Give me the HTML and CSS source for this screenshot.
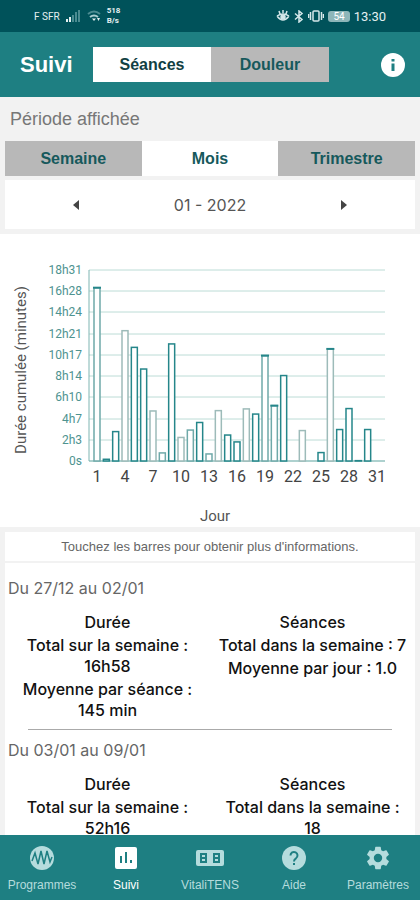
FILE: index.html
```html
<!DOCTYPE html>
<html lang="fr">
<head>
  <meta charset="UTF-8" />
  <meta name="viewport" content="width=device-width, initial-scale=1.0">
  <title>Suivi - Séances</title>
  <link rel="stylesheet" href="styles.css">
</head>
<body>
  <div class="status-bar">
    <div class="status-left">
      <span>F SFR</span>
      <svg width="15" height="12" viewBox="0 0 15 12">
        <path d="M0 9h2v3H0zM3 7h2v5H3z" fill="#e4f0f1"/>
        <path d="M6 5h2v7H6zM9 2h2v10H9zM12 0h2v12h-2z" fill="#4b8b91"/>
      </svg>
      <svg width="14" height="12" viewBox="0 0 14 12" fill="none">
        <path d="M1 4q6-5 12 0" stroke="#4b8b91" stroke-width="2"/>
        <path d="M3 7q4-3 8 0" stroke="#a9cdd0" stroke-width="2"/>
        <path d="M5 8.500h4L7 11zM10 8h3l-1.500 3z" fill="#e4f0f1"/>
      </svg>
      <span class="net-speed">518<br>B/s</span>
    </div>
    <div class="status-right">
      <svg width="14" height="12" viewBox="0 0 14 12" fill="none" stroke="#d5e8ea" stroke-width="1.500">
        <path d="M1 6q6 8 12 0M1 6q6-4 12 0M3 1l1 3M7 0v3M11 1l-1 3"/>
        <circle cx="7" cy="7" r="2" fill="#d5e8ea"/>
      </svg>
      <svg width="10" height="13" viewBox="0 0 10 13" fill="none" stroke="#d5e8ea" stroke-width="1.500">
        <path d="M1 3.500l7 6-3 2.500V1l3 2.500-7 6"/>
      </svg>
      <svg width="16" height="12" viewBox="0 0 16 12" fill="none" stroke="#d5e8ea" stroke-width="1.500">
        <rect x="5" y="1" width="6" height="10" rx="1"/>
        <path d="M2.500 2v8M13.500 2v8M.5 4v4M15.500 4v4"/>
      </svg>
      <span class="battery">54</span>
      <span class="clock">13:30</span>
    </div>
  </div>

  <header class="header">
    <h1>Suivi</h1>
    <div class="segments header-tabs">
      <button class="segment active">Séances</button>
      <button class="segment">Douleur</button>
    </div>
    <button class="info" aria-label="Informations">
      <svg width="24" height="24" viewBox="0 0 24 24">
        <circle cx="12" cy="12" r="12" fill="#fff"/>
        <path d="M10.500 6h3v2.500h-3zM10.500 10.500h3V18h-3z" fill="#1e7f82"/>
      </svg>
    </button>
  </header>

  <main class="content">
    <section class="period">
      <h2>Période affichée</h2>
      <div class="segments">
        <button class="segment">Semaine</button>
        <button class="segment active">Mois</button>
        <button class="segment">Trimestre</button>
      </div>
      <div class="month">
        <button class="arrow" aria-label="Mois précédent">
          <svg width="6" height="10" viewBox="0 0 6 10"><path d="M6 0v10L0 5z" fill="#444"/></svg>
        </button>
        <span class="month-label">01 - 2022</span>
        <button class="arrow" aria-label="Mois suivant">
          <svg width="6" height="10" viewBox="0 0 6 10"><path d="M0 0v10l6-5z" fill="#444"/></svg>
        </button>
      </div>
    </section>

    <section class="chart-box">
      <svg class="chart" id="chart" viewBox="0 0 420 293"></svg>
    </section>

    <p class="hint">Touchez les barres pour obtenir plus d'informations.</p>

    <section class="weeks">
      <article class="week">
        <h3>Du 27/12 au 02/01</h3>
        <div class="stats">
          <div class="stat">
            <h4>Durée</h4>
            <p>Total sur la semaine :<br>16h58</p>
            <p>Moyenne par séance :<br>145 min</p>
          </div>
          <div class="stat">
            <h4>Séances</h4>
            <p>Total dans la semaine : 7</p>
            <p>Moyenne par jour : 1.0</p>
          </div>
        </div>
      </article>
      <hr>
      <article class="week">
        <h3>Du 03/01 au 09/01</h3>
        <div class="stats">
          <div class="stat">
            <h4>Durée</h4>
            <p>Total sur la semaine :<br>52h16</p>
          </div>
          <div class="stat">
            <h4>Séances</h4>
            <p>Total dans la semaine :<br>18</p>
          </div>
        </div>
      </article>
    </section>
  </main>

  <nav class="tabbar">
    <a href="#programmes">
      <svg width="24" height="24" viewBox="0 0 24 24">
        <circle cx="12" cy="12" r="12" fill="#b5dcdd"/>
        <path d="M2 15L5 7l3 11 3-13 3 13 3-13 3 11 2-5" fill="none" stroke="#1e7f82" stroke-width="1.500"/>
      </svg>
      <span>Programmes</span>
    </a>
    <a href="#suivi" class="active">
      <svg width="24" height="24" viewBox="0 0 24 24">
        <rect x="1" y="1" width="22" height="22" rx="2" fill="#fff"/>
        <path d="M6 10h2v7H6zM11 6h2v11h-2zM16 14h2v3h-2z" fill="#1e7f82"/>
      </svg>
      <span>Suivi</span>
    </a>
    <a href="#vitalitens">
      <svg width="30" height="24" viewBox="0 0 30 24">
        <rect x="1" y="4" width="28" height="16" rx="2" fill="#b5dcdd"/>
        <path d="M5 7h7v10H5zM18 7h7v10h-7z" fill="#1e7f82"/>
        <path d="M7 9h3v2H7zM7 13h3v2H7zM20 9h3v2h-3zM20 13h3v2h-3z" fill="#b5dcdd"/>
      </svg>
      <span>VitaliTENS</span>
    </a>
    <a href="#aide">
      <svg width="24" height="24" viewBox="0 0 24 24">
        <circle cx="12" cy="12" r="12" fill="#b5dcdd"/>
        <path d="M8.500 9.500a3.500 3.500 0 1 1 5.500 2.800q-2 1.200-2 3.200" fill="none" stroke="#1e7f82" stroke-width="2"/>
        <rect x="11" y="17" width="2" height="2" fill="#1e7f82"/>
      </svg>
      <span>Aide</span>
    </a>
    <a href="#parametres">
      <svg width="28" height="28" viewBox="0 0 24 24">
        <path fill="#b5dcdd" d="M19.140 12.940c.04-.3.060-.61.060-.94s-.02-.64-.07-.94l2.030-1.580a.49.49 0 0 0 .12-.61l-1.920-3.320a.49.49 0 0 0-.59-.22l-2.390.96a7 7 0 0 0-1.620-.94l-.36-2.540A.48.48 0 0 0 13.920 2.400h-3.840a.48.48 0 0 0-.48.410l-.36 2.540a7.300 7.300 0 0 0-1.620.94l-2.390-.96a.48.48 0 0 0-.59.220L2.720 8.870a.47.470 0 0 0 .12.610l2.030 1.580a6 6 0 0 0 0 1.880l-2.030 1.580a.49.490 0 0 0-.12.610l1.920 3.320c.12.220.37.290.59.220l2.390-.96c.5.380 1.030.7 1.620.94l.36 2.540c.05.240.24.410.48.410h3.840c.24 0 .44-.17.470-.41l.36-2.540a7 7 0 0 0 1.620-.94l2.390.96c.22.080.47 0 .59-.22l1.920-3.320a.47.470 0 0 0-.12-.61zM12 15.600a3.600 3.600 0 1 1 0-7.200 3.600 3.600 0 0 1 0 7.200z"/>
      </svg>
      <span>Paramètres</span>
    </a>
  </nav>

  <script>
    const chart = document.getElementById("chart");
    const labels = ["0s", "2h3", "4h7", "6h10", "8h14", "10h17", "12h21", "14h24", "16h28", "18h31"];
    const maxMinutes = 1111;

    // minutes per day of the month
    const minutes = [
      1008, 10, 171, 758, 661, 535, 291, 47, 681, 137, 180, 224, 41, 293, 151, 111,
      303, 273, 613, 322, 497, 0, 177, 0, 49, 652, 183, 305, 2, 183, 0
    ];
    const dark = "#25868a";
    const mid = "#6fa9a9";
    const pale = "#9dbbb9";
    const midDays = [1, 8, 11, 13, 19, 20];
    const paleDays = [4, 7, 10, 14, 17, 23, 26];
    const cappedDays = [1, 19, 20, 26];

    const plot = { left: 89, right: 385, top: 36, bottom: 227 };
    const plotHeight = plot.bottom - plot.top;
    const step = (377 - 97) / 30;
    let out = "";

    labels.forEach((label, i) => {
      const y = Math.round(plot.bottom - i * plotHeight / 9);
      out += `<line x1="${plot.left}" y1="${y}" x2="${plot.right}" y2="${y}" stroke="#bcdcd6"/>`;
      out += `<text class="y-label" x="82" y="${y + 4}">${label}</text>`;
    });
    out += `<line x1="${plot.left}" y1="${plot.top}" x2="${plot.left}" y2="${plot.bottom}" stroke="#7fb5b2"/>`;
    out += `<line x1="${plot.left}" y1="${plot.bottom}" x2="${plot.right}" y2="${plot.bottom}" stroke="#7fb5b2"/>`;

    minutes.forEach((value, i) => {
      const day = i + 1;
      const x = 97 + i * step;
      const h = value / maxMinutes * plotHeight;
      const y = plot.bottom - h;
      const color = paleDays.includes(day) ? pale : midDays.includes(day) ? mid : dark;
      if (value) {
        out += `<rect x="${x - 3}" y="${y}" width="6" height="${h}" fill="#fff" stroke="${color}" stroke-width="1.5"/>`;
      }
      if (cappedDays.includes(day)) {
        out += `<line x1="${x - 4}" y1="${y}" x2="${x + 4}" y2="${y}" stroke="${dark}" stroke-width="2"/>`;
      }
      if (i % 3 === 0) {
        out += `<text class="x-label" x="${x}" y="248">${day}</text>`;
      }
    });

    out += `<text class="axis-title" x="215" y="287">Jour</text>`;
    out += `<text class="axis-title" transform="translate(26 136) rotate(-90)">Durée cumulée (minutes)</text>`;
    chart.innerHTML = out;
  </script>
</body>
</html>
```
FILE: styles.css
```css
* {
  box-sizing: border-box;
}
body {
  margin: 0;
  height: 100vh;
  display: flex;
  flex-direction: column;
  font-family: "Liberation Sans", Arial, sans-serif;
  background: #f2f2f2;
  color: #111;
}
h1, h2, h3, h4, p {
  margin: 0;
}
button {
  border: none;
  padding: 0;
  background: none;
  font-family: inherit;
  cursor: pointer;
}
svg {
  display: block;
}

.status-bar {
  flex: none;
  height: 32px;
  padding: 0 34px;
  display: flex;
  align-items: center;
  justify-content: space-between;
  background: #00525a;
  color: #e4f0f1;
  font-family: Roboto, sans-serif;
  font-size: 10px;
}
.status-left, .status-right {
  display: flex;
  align-items: center;
  gap: 6px;
}
.status-right {
  gap: 4px;
}
.net-speed {
  font-size: 8px;
  line-height: 10px;
  font-weight: bold;
}
.battery {
  padding: 0 5px;
  border-radius: 3px;
  background: #8db6b9;
  color: #fff;
  line-height: 11px;
}
.clock {
  font-size: 13px;
}

.header {
  flex: none;
  height: 65px;
  padding: 0 15px 0 20px;
  display: flex;
  align-items: center;
  background: #1e7f82;
}
.header h1 {
  width: 73px;
  font-size: 22px;
  color: #fff;
}
.header-tabs {
  flex: 1;
}
.info {
  margin-left: 52px;
}
.segments {
  display: flex;
}
.segment {
  flex: 1;
  height: 35px;
  background: #b8b8b8;
  color: #16595c;
  font-size: 16px;
  font-weight: bold;
}
.segment.active {
  background: #fff;
}
.header-tabs .active {
  color: #123f43;
}

.content {
  flex: 1;
  min-height: 0;
  overflow: hidden;
}
.period {
  padding: 12px 5px 5px;
}
.period h2 {
  padding-left: 5px;
  margin-bottom: 12px;
  font-size: 18px;
  line-height: 20px;
  font-weight: normal;
  color: #777;
}
.month {
  height: 49px;
  margin-top: 4px;
  padding: 0 58px;
  display: flex;
  align-items: center;
  justify-content: space-between;
  background: #fff;
}
.arrow {
  padding: 10px;
}
.month-label {
  font-family: Inter, sans-serif;
  font-size: 16px;
  color: #555;
}

.chart-box {
  background: #fff;
}
.chart {
  width: 100%;
  font-family: Roboto, sans-serif;
}
.y-label {
  font-size: 12px;
  fill: #4e9390;
  text-anchor: end;
}
.x-label {
  font-size: 16px;
  fill: #444;
  text-anchor: middle;
}
.axis-title {
  font-size: 15px;
  fill: #555;
  text-anchor: middle;
}

.hint {
  margin: 5px 5px 2px;
  background: #fff;
  font-size: 13px;
  line-height: 29px;
  text-align: center;
  color: #666;
}
.weeks {
  margin: 0 5px;
  padding-top: 5px;
  background: #fff;
}
.week {
  padding-top: 10px;
}
.week h3 {
  padding-left: 3px;
  font-family: Inter, sans-serif;
  font-size: 16px;
  line-height: 20px;
  font-weight: normal;
  color: #666;
}
.stats {
  padding: 14px 0 8px;
  display: grid;
  grid-template-columns: 1fr 1fr;
}
.stat {
  text-align: center;
  font-family: Inter, sans-serif;
  font-size: 16px;
  line-height: 21px;
  font-weight: 500;
}
.stat h4 {
  font-size: 16px;
  font-weight: 500;
}
.stat p {
  margin-top: 2px;
}
.weeks hr {
  height: 1px;
  margin: 0 23px;
  border: none;
  background: #aaa;
}

.tabbar {
  flex: none;
  height: 65px;
  display: flex;
  background: #1e7f82;
}
.tabbar a {
  flex: 1;
  padding-top: 9px;
  display: flex;
  flex-direction: column;
  align-items: center;
  color: #b5dcdd;
  font-size: 12px;
  text-decoration: none;
}
.tabbar svg {
  height: 28px;
}
.tabbar span {
  margin-top: 5px;
  line-height: 16px;
}
.tabbar .active {
  color: #fff;
}
```
